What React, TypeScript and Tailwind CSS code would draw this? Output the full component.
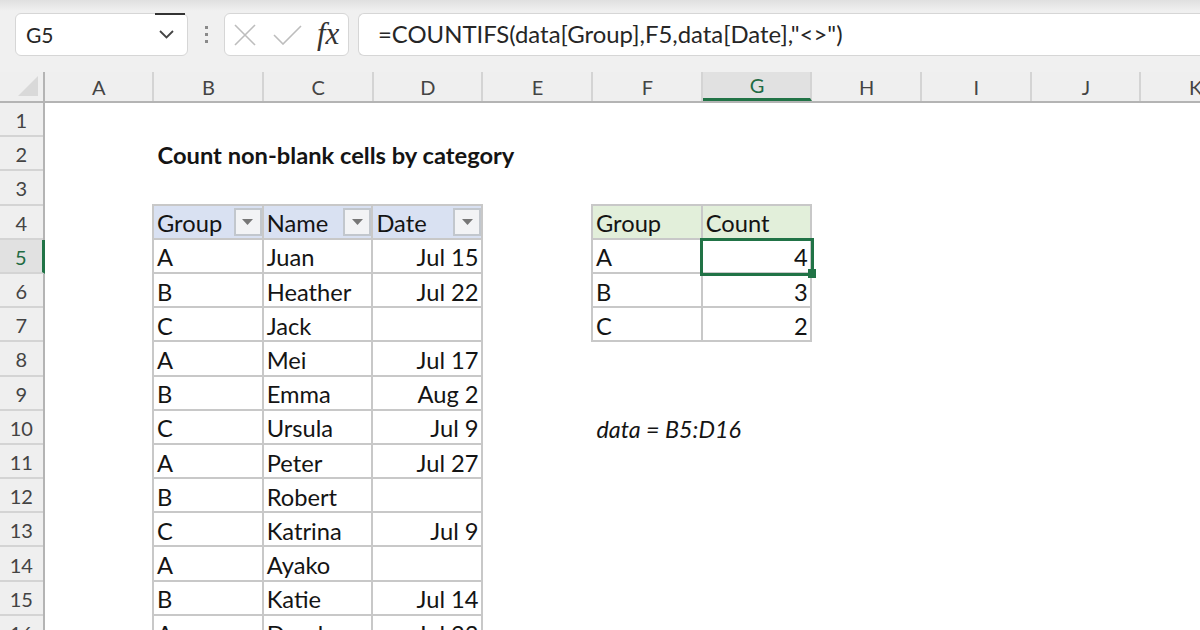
import React from "react";

const cols = ["A","B","C","D","E","F","G","H","I","J","K"];
const font = "font-['Lato','Liberation_Sans',sans-serif]";

const data: [string,string,string][] = [
  ["A","Juan","Jul 15"],["B","Heather","Jul 22"],["C","Jack",""],["A","Mei","Jul 17"],
  ["B","Emma","Aug 2"],["C","Ursula","Jul 9"],["A","Peter","Jul 27"],["B","Robert",""],
  ["C","Katrina","Jul 9"],["A","Ayako",""],["B","Katie","Jul 14"],["A","Derek","Jul 23"],
];

function Cell({children,right,hdr}:{children?:React.ReactNode;right?:boolean;hdr?:string}) {
  return (
    <div className={`relative h-[34.2px] w-[109.7px] shrink-0 border-r-[2px] border-b-[2px] border-[#c8c8c8] flex items-center pl-[3px] pr-[2.5px] pt-[5px] text-[23.7px] leading-none text-[#141414] ${right?"justify-end":""} ${hdr??"bg-white"}`}>
      {children}
    </div>
  );
}

function Filter() {
  return (
    <span className="absolute right-0 top-[2px] w-[28px] h-[28px] border-[2px] border-[#c2c7cd] bg-[#f2f3f5] flex items-center justify-center">
      <svg width="13" height="8" viewBox="0 0 13 8"><path d="M1 1h11L6.5 7z" fill="#777"/></svg>
    </span>
  );
}

function Row({cells}:{cells:React.ReactNode}) { return <div className="flex">{cells}</div>; }

export default function App() {
  return (
    <div className={`w-[1200px] h-[630px] overflow-hidden bg-white flex flex-col ${font}`}>
      {/* formula bar */}
      <div className="h-[72px] shrink-0 flex items-start pt-[13px] pl-[15px] bg-gradient-to-b from-[#e0e0e0] via-[#f0f0f0] via-[15%] to-[#f0f0f0]">
        <div className="relative w-[173px] h-[43px] bg-white rounded-[6px] border border-[#d6d6d6] flex items-center justify-between pl-[10px] pr-[13px] text-[21px] text-[#262626]">
          <span className="absolute right-[2px] -top-px w-[30px] h-[2px] bg-[#333]"></span>
          <span>G5</span>
          <svg width="15" height="9" viewBox="0 0 15 9"><path d="M1 1l6.5 6.5L14 1" fill="none" stroke="#444" strokeWidth="1.8"/></svg>
        </div>
        <div className="w-[36px] h-[43px] flex flex-col items-center justify-center gap-[4px]">
          <span className="w-[3px] h-[3px] bg-[#8a8a8a]"></span>
          <span className="w-[3px] h-[3px] bg-[#8a8a8a]"></span>
          <span className="w-[3px] h-[3px] bg-[#8a8a8a]"></span>
        </div>
        <div className="w-[125px] h-[43px] bg-white rounded-[6px] border border-[#d6d6d6] flex items-center pl-[9px]">
          <svg width="22" height="22" viewBox="0 0 22 22"><path d="M1 1l20 20M21 1L1 21" stroke="#bdbdbd" strokeWidth="1.6" fill="none"/></svg>
          <svg className="ml-[17px]" width="29" height="20" viewBox="0 0 29 20"><path d="M1 10l9 9L28 1" stroke="#bdbdbd" strokeWidth="1.6" fill="none"/></svg>
          <span className="ml-[15px] font-['Liberation_Serif',serif] italic text-[31px] leading-none text-[#333] -mt-[3px]">fx</span>
        </div>
        <div className="ml-[9px] flex-1 h-[43px] bg-white rounded-l-[6px] border border-r-0 border-[#d6d6d6] flex items-center pl-[19px] pb-[1px] text-[23.9px] text-[#262626] whitespace-nowrap">
          =COUNTIFS(data[Group],F5,data[Date],"&lt;&gt;")
        </div>
      </div>

      {/* column headers */}
      <div className="flex h-[31px] shrink-0 bg-[#efefef] border-b-[2px] border-[#b4b4b4]">
        <div className="w-[44.5px] shrink-0 border-r-[2px] border-[#b4b4b4] relative">
          <svg className="absolute right-[5px] bottom-[5px]" width="20" height="20" viewBox="0 0 20 20"><path d="M20 0v20H0z" fill="#d9d9d9"/></svg>
        </div>
        {cols.map(c=>(
          <div key={c} className={`w-[109.7px] shrink-0 flex items-center justify-center pl-[1px] text-[20px] border-r-[2px] ${c==="G"?"bg-[#e1e1e1] border-b-[3px] border-b-[#217346] text-[#1f6b43] border-r-[#d4d4d4]":"text-[#444] border-[#d4d4d4]"}`}>{c}</div>
        ))}
      </div>

      <div className="flex flex-1 min-h-0">
        {/* row headers */}
        <div className="w-[44.5px] shrink-0 bg-[#efefef] border-r-[2px] border-[#b4b4b4] flex flex-col">
          {Array.from({length:16},(_,i)=>i+1).map(n=>(
            <div key={n} className={`h-[34.2px] shrink-0 flex items-center justify-center pt-[2px] text-[20px] border-b-[2px] border-[#d4d4d4] ${n===5?"bg-[#e1e1e1] text-[#1f6b43] border-r-[3px] border-r-[#217346] -mr-[2px]":"text-[#444]"}`}>{n}</div>
          ))}
        </div>

        {/* sheet */}
        <div className="flex-1 flex flex-col min-w-0">
          <div className="h-[34.2px] shrink-0"></div>
          <div className="h-[34.2px] shrink-0 flex items-center pl-[113px] pt-[3px] text-[23.7px] font-bold text-[#141414] leading-none whitespace-nowrap">Count non-blank cells by category</div>
          <div className="h-[32.2px] shrink-0"></div>
          <div className="flex items-start">
            {/* data table */}
            <div className="ml-[107.5px] w-[329.1px] shrink-0 border-t-[2px] border-l-[2px] border-[#c8c8c8] box-content">
              <Row cells={<>
                <Cell hdr="bg-[#d9e1f2]">Group<Filter/></Cell>
                <Cell hdr="bg-[#d9e1f2]">Name<Filter/></Cell>
                <Cell hdr="bg-[#d9e1f2]">Date<Filter/></Cell>
              </>}/>
              {data.map(([g,n,d],i)=>(
                <Row key={i} cells={<><Cell>{g}</Cell><Cell>{n}</Cell><Cell right>{d}</Cell></>}/>
              ))}
            </div>
            {/* summary */}
            <div className="ml-[107.9px] flex flex-col shrink-0">
              <div className="border-t-[2px] border-l-[2px] border-[#c8c8c8] w-[219.4px] box-content">
                <Row cells={<><Cell hdr="bg-[#e2efda]">Group</Cell><Cell hdr="bg-[#e2efda]">Count</Cell></>}/>
                <Row cells={<><Cell>A</Cell><Cell right>4</Cell></>}/>
                <Row cells={<><Cell>B</Cell><Cell right>3</Cell></>}/>
                <Row cells={<><Cell>C</Cell><Cell right>2</Cell></>}/>
              </div>
              <div className="relative">
                <span className="absolute left-[109.5px] -top-[104.7px] w-[114px] h-[38px] border-[3px] border-[#217346]"></span>
                <span className="absolute left-[217px] -top-[73px] w-[8px] h-[9px] bg-[#217346]"></span>
              </div>
              <div className="mt-[70px] pl-[5.5px] h-[34px] flex items-center italic text-[23.3px] leading-none text-[#141414]">data = B5:D16</div>
            </div>
          </div>
        </div>
      </div>
    </div>
  );
}
